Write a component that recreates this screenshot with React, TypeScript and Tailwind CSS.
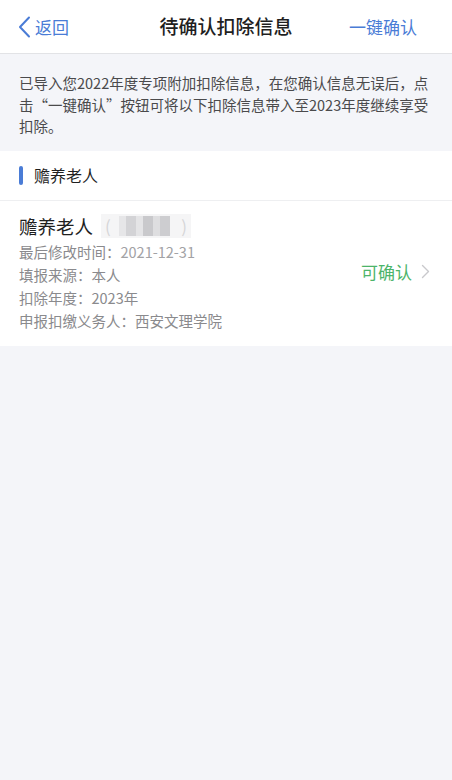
const FONT = "font-['PingFang_SC','Noto_Sans_CJK_SC',sans-serif]";

function BackIcon() {
  return (
    <svg width="13" height="22" viewBox="0 0 13 22" fill="none">
      <path d="M11 1.5L2 11l9 9.5" stroke="#4a7cd6" strokeWidth="2" strokeLinecap="round" strokeLinejoin="round" />
    </svg>
  );
}

function Chevron() {
  return (
    <svg width="9" height="15" viewBox="0 0 9 15" fill="none">
      <path d="M1.5 1.5l6 6-6 6" stroke="#c9c9cc" strokeWidth="1.4" strokeLinecap="round" strokeLinejoin="round" />
    </svg>
  );
}

function Blurred() {
  return (
    <div className="ml-2 flex h-[24px] w-[90px] items-center bg-[#f5f5f6] px-1 text-[17px] text-[#d6d6d8]">
      <span>(</span>
      <div className="ml-2 flex h-[20px] items-stretch">
        <div className="w-[7px] bg-[#e6e6e8]" />
        <div className="w-[10px] bg-[#d3d3d6]" />
        <div className="w-[7px] bg-[#e4e4e6]" />
        <div className="w-[10px] bg-[#c9c9cc]" />
        <div className="w-[7px] bg-[#dedee0]" />
        <div className="w-[10px] bg-[#cdcdd0]" />
      </div>
      <span className="ml-auto">)</span>
    </div>
  );
}

export default function App() {
  return (
    <div className={`${FONT} min-h-[780px] w-[452px] bg-[#f4f5f9]`}>
      <header className="flex h-[54px] items-center border-b border-[#e2e3e6] bg-white px-[18px]">
        <div className="flex w-[100px] items-center gap-[4px] text-[17px] text-[#4a7cd6]">
          <BackIcon />
          <span>返回</span>
        </div>
        <h1 className="flex-1 text-center text-[19px] font-medium text-[#1f1f1f]">待确认扣除信息</h1>
        <div className="w-[100px] pr-[17px] text-right text-[17px] text-[#4a7cd6]">一键确认</div>
      </header>

      <p className="px-[19px] pb-[14px] pt-[18px] text-[14.5px] leading-[21.5px] text-[#4a4a4c]">
        已导入您2022年度专项附加扣除信息，在您确认信息无误后，点
        <br />
        击“一键确认”按钮可将以下扣除信息带入至2023年度继续享受
        <br />
        扣除。
      </p>

      <section className="bg-white">
        <div className="flex h-[50px] items-center border-b border-[#eeeff1] px-[19px]">
          <span className="h-[19px] w-[4px] rounded-full bg-[#4a7cd6]" />
          <span className="ml-[11px] text-[16px] text-[#1f1f1f]">赡养老人</span>
        </div>

        <div className="flex items-center px-[19px] pb-[14px] pt-[13px]">
          <div className="flex-1">
            <div className="flex items-center">
              <span className="text-[18.5px] leading-[25px] text-[#1f1f1f]">赡养老人</span>
              <Blurred />
            </div>
            <div className="mt-[1px] flex flex-col text-[14.5px] leading-[23px] text-[#8a8a8d]">
              <span>最后修改时间：<span className="text-[#a2a2a5]">2021-12-31</span></span>
              <span>填报来源：本人</span>
              <span>扣除年度：2023年</span>
              <span>申报扣缴义务人：西安文理学院</span>
            </div>
          </div>
          <div className="mt-[-2px] flex items-center gap-[9px] pr-[3px]">
            <span className="text-[17px] text-[#4cb46a]">可确认</span>
            <Chevron />
          </div>
        </div>
      </section>
    </div>
  );
}
